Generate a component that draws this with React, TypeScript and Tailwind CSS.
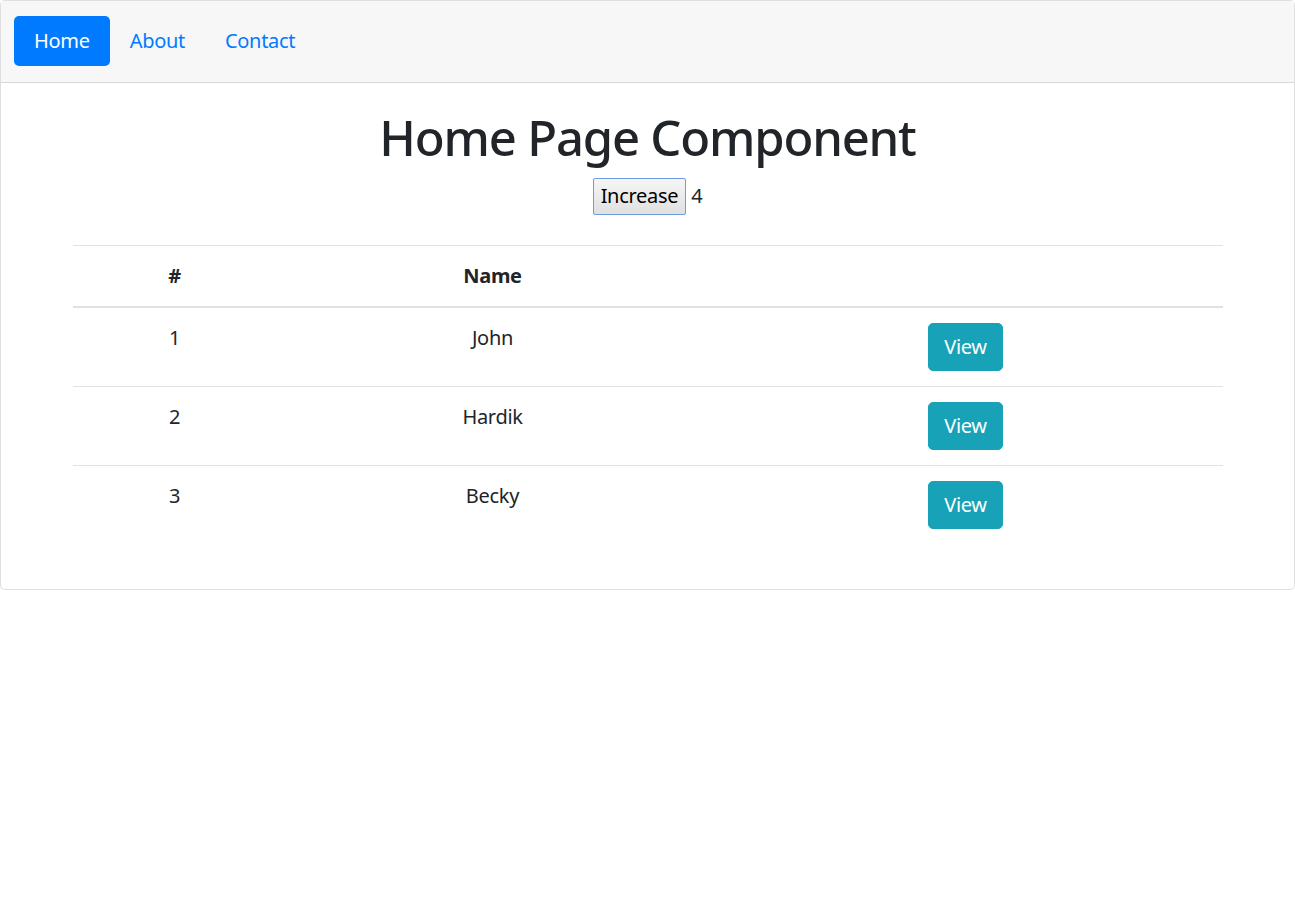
import { useState } from "react";

const PEOPLE = [
  { id: 1, name: "John" },
  { id: 2, name: "Hardik" },
  { id: 3, name: "Becky" },
];

export default function App() {
  const [count, setCount] = useState(4);

  return (
    <div className="font-['Noto_Sans',sans-serif] text-[20px] leading-[1.5] tracking-[-0.3px] text-[#212529]">
      <div className="rounded-[5px] border border-black/[0.125] bg-white">
        <div className="border-b border-black/[0.125] bg-[#f7f7f7] px-[25px] pt-[15px] pb-[16px]">
          <ul className="-mx-[12px] flex">
            <li>
              <a className="block rounded-[5px] bg-[#007bff] px-[20px] py-[10px] text-white">Home</a>
            </li>
            <li>
              <a className="block px-[20px] py-[10px] text-[#007bff]">About</a>
            </li>
            <li>
              <a className="block px-[20px] py-[10px] text-[#007bff]">Contact</a>
            </li>
          </ul>
        </div>

        <div className="p-[25px] text-center">
          <h1 className="mb-[10px] text-[49px] leading-[1.22] font-medium tracking-[-1.2px]">Home Page Component</h1>
          <div className="flex items-center justify-center gap-[5px]">
            <button
              onClick={() => setCount(count + 1)}
              className="h-[37px] rounded-[2px] border border-[#6f9be3] bg-gradient-to-b from-[#f6f6f6] to-[#e0e0e0] px-[7px] text-[20px] leading-none text-black"
            >
              Increase
            </button>
            <span>{count}</span>
          </div>

          <div className="mt-[30px] px-[46.5px]">
            <table className="mb-[20px] w-full border-collapse">
              <thead>
                <tr>
                  <th className="w-[204px] border-t border-b-2 border-[#dee2e6] p-[15px] align-bottom font-bold">#</th>
                  <th className="w-[432px] border-t border-b-2 border-[#dee2e6] p-[15px] align-bottom font-bold">Name</th>
                  <th className="border-t border-b-2 border-[#dee2e6] p-[15px]"></th>
                </tr>
              </thead>
              <tbody>
                {PEOPLE.map((p, i) => (
                  <tr key={p.id}>
                    <td className={`${i > 0 ? "border-t border-[#dee2e6]" : ""} p-[15px] align-top`}>{p.id}</td>
                    <td className={`${i > 0 ? "border-t border-[#dee2e6]" : ""} p-[15px] align-top`}>{p.name}</td>
                    <td className={`${i > 0 ? "border-t border-[#dee2e6]" : ""} p-[15px] align-top`}>
                      <button className="rounded-[5px] border border-[#17a2b8] bg-[#17a2b8] px-[15px] py-[8px] leading-[1.5] text-white">
                        View
                      </button>
                    </td>
                  </tr>
                ))}
              </tbody>
            </table>
          </div>
        </div>
      </div>
    </div>
  );
}
